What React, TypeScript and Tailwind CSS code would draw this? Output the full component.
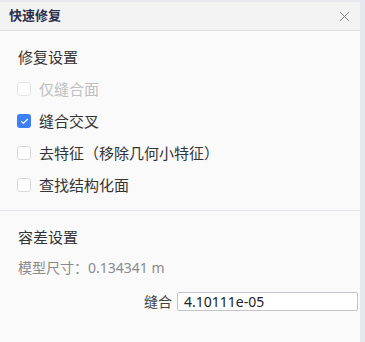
import React, { useState } from 'react';
import { X, Check } from 'lucide-react';

interface Option {
  id: string;
  label: string;
  checked: boolean;
  disabled?: boolean;
}

const initialOptions: Option[] = [
  { id: 'sew-only', label: '仅缝合面', checked: false, disabled: true },
  { id: 'sew-cross', label: '缝合交叉', checked: true },
  { id: 'defeature', label: '去特征（移除几何小特征）', checked: false },
  { id: 'structured', label: '查找结构化面', checked: false },
];

export default function App() {
  const [options, setOptions] = useState(initialOptions);
  const [tolerance, setTolerance] = useState('4.10111e-05');

  const toggle = (id: string) => {
    setOptions(prev => prev.map(o => (o.id === id && !o.disabled ? { ...o, checked: !o.checked } : o)));
  };

  return (
    <div
      className="w-[365px] h-[342px] bg-[#e6e8ee] pt-[2px] pr-[5px] overflow-hidden"
      style={{ fontFamily: '"Noto Sans", "Noto Sans CJK SC", sans-serif' }}
    >
      <div className="h-full bg-[#fafafa] flex flex-col">
        {/* Header */}
        <div className="h-[29px] flex items-center justify-between pl-[9px] pr-[7px] bg-[#f3f3f3] border-b border-[#dcdcdc]">
          <h2 className="text-[13px] font-bold text-[#2b2f4c]">快速修复</h2>
          <button className="text-[#777] p-0" title="关闭">
            <X size={17} strokeWidth={1.3} />
          </button>
        </div>

        {/* Repair settings */}
        <div className="pl-[17px] pt-[16px] pb-[9px] border-b border-[#e4e4ee]">
          <h3 className="text-[15px] leading-[20px] text-[#333] pl-px">修复设置</h3>
          <div className="mt-[6px]">
            {options.map(o => (
              <label
                key={o.id}
                onClick={() => toggle(o.id)}
                className={`flex items-center h-[32px] gap-[8px] ${o.disabled ? 'text-[#c0c0c0]' : 'text-[#333]'}`}
              >
                <span
                  className={`w-[14px] h-[14px] rounded-[3px] flex items-center justify-center ${
                    o.checked ? 'bg-[#3d7ff5]' : o.disabled ? 'bg-white border border-[#e4e4e4]' : 'bg-white border border-[#dadada]'
                  }`}
                >
                  {o.checked && <Check size={9} strokeWidth={3} className="text-white" />}
                </span>
                <span className="text-[15px] leading-[20px]">{o.label}</span>
              </label>
            ))}
          </div>
        </div>

        {/* Tolerance settings */}
        <div className="pl-[18px] pr-[2px] pt-[16px]">
          <h3 className="text-[15px] leading-[20px] text-[#333]">容差设置</h3>
          <div className="mt-[11px] text-[14px] leading-[20px] text-[#8a8a8a]">模型尺寸：0.134341 m</div>
          <div className="mt-[13px] flex items-center justify-end gap-[5px]">
            <span className="text-[14px] text-[#444]">缝合</span>
            <input
              value={tolerance}
              onChange={e => setTolerance(e.target.value)}
              className="w-[181px] h-[19px] px-[6px] text-[14px] text-[#222] bg-white border border-[#c4c4cc] rounded-[2px] outline-none"
            />
          </div>
        </div>
      </div>
    </div>
  );
}
